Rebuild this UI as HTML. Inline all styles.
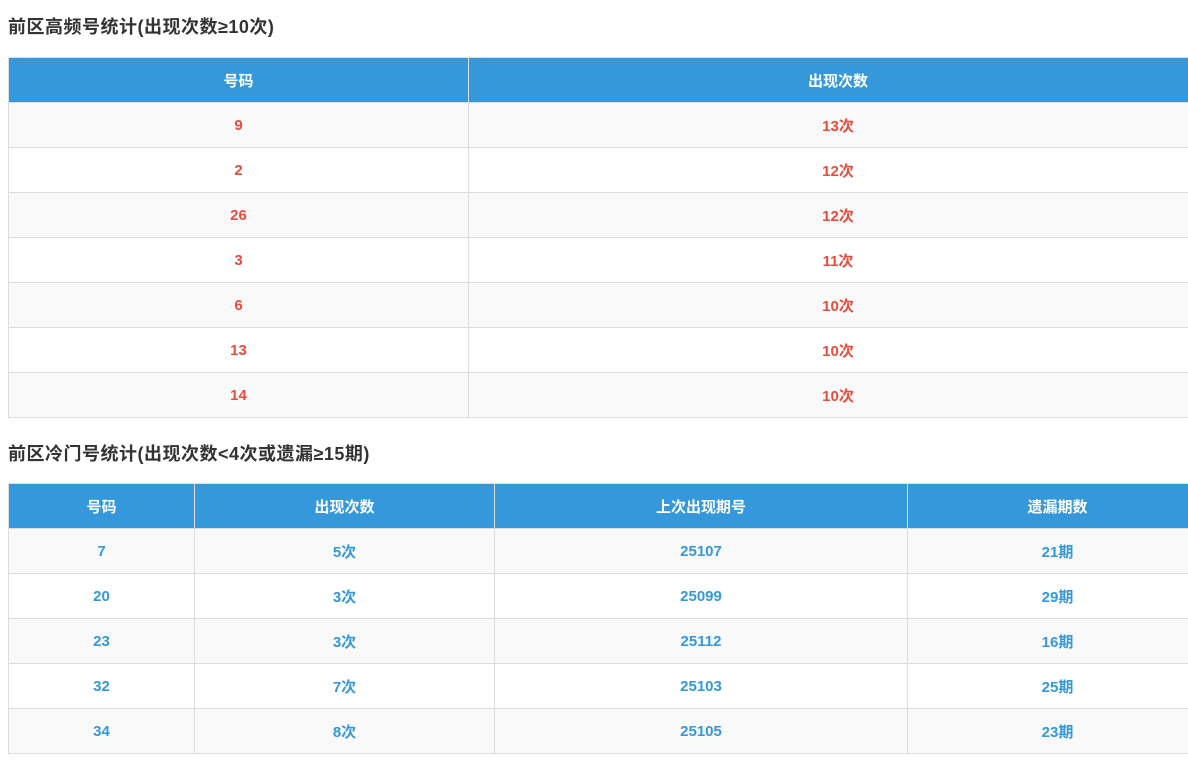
<!DOCTYPE html>
<html><head><meta charset="utf-8"><style>
body{margin:0;background:#fff;font-family:"Liberation Sans","Noto Sans CJK SC",sans-serif;width:1188px;height:760px;overflow:hidden;position:relative}
h3{position:absolute;left:8px;margin:0;font-size:18px;font-weight:bold;color:#333;line-height:20px;white-space:nowrap;letter-spacing:0.5px}
table{position:absolute;left:8px;border-collapse:collapse;table-layout:fixed;width:1200px}
th,td{border:1px solid #ddd;text-align:center;font-size:15px;font-weight:bold;padding:0;height:44px}
th{background:#3498db;color:#fff;border-color:#ddd}
tr:nth-child(even) td{background:#f9f9f9}
.r td{color:#e74c3c}
.b td{color:#3498db}
</style></head><body>
<h3 style="top:17px">前区高频号统计(出现次数≥10次)</h3>
<table class="r" style="top:57px">
<colgroup><col style="width:460px"><col></colgroup>
<tr><th>号码</th><th>出现次数</th></tr>
<tr><td>9</td><td>13次</td></tr>
<tr><td>2</td><td>12次</td></tr>
<tr><td>26</td><td>12次</td></tr>
<tr><td>3</td><td>11次</td></tr>
<tr><td>6</td><td>10次</td></tr>
<tr><td>13</td><td>10次</td></tr>
<tr><td>14</td><td>10次</td></tr>
</table>
<h3 style="top:444px">前区冷门号统计(出现次数&lt;4次或遗漏≥15期)</h3>
<table class="b" style="top:483px">
<colgroup><col style="width:186px"><col style="width:300px"><col style="width:413px"><col></colgroup>
<tr><th>号码</th><th>出现次数</th><th>上次出现期号</th><th>遗漏期数</th></tr>
<tr><td>7</td><td>5次</td><td>25107</td><td>21期</td></tr>
<tr><td>20</td><td>3次</td><td>25099</td><td>29期</td></tr>
<tr><td>23</td><td>3次</td><td>25112</td><td>16期</td></tr>
<tr><td>32</td><td>7次</td><td>25103</td><td>25期</td></tr>
<tr><td>34</td><td>8次</td><td>25105</td><td>23期</td></tr>
</table>
</body></html>
